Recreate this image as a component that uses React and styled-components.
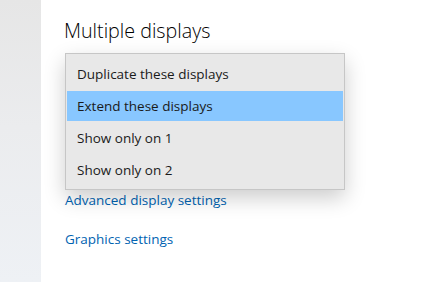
import React from "react";
import styled, { createGlobalStyle } from "styled-components";

const Global = createGlobalStyle`
  html, body { margin: 0; padding: 0; background: #ffffff; }
  body { font-family: "Open Sans", "Noto Sans", sans-serif; color: #1b1b1b; }
  #root { width: 434px; height: 282px; overflow: hidden; }
`;

const Page = styled.div`
  position: relative;
  display: flex;
  width: 434px;
  height: 282px;
  background: #ffffff;
`;

const Sidebar = styled.div`
  width: 41px;
  flex: 0 0 41px;
  background: linear-gradient(180deg, #e6e6e6 0%, #ebecee 45%, #eef1f5 100%);
`;

const Main = styled.div`
  flex: 1;
  display: flex;
  flex-direction: column;
  padding: 17px 0 0 23px;
`;

const Heading = styled.h2`
  margin: 0;
  font-size: 19.7px;
  font-weight: 350;
  line-height: 28px;
  color: #000;
  letter-spacing: 0;
`;

const Spacer = styled.div`
  height: ${(p) => p.h}px;
`;

const Link = styled.a`
  display: block;
  margin-left: 1px;
  font-size: 13.5px;
  line-height: 20px;
  color: #0063b1;
  text-decoration: none;
  cursor: pointer;
`;

const Menu = styled.ul`
  position: absolute;
  left: 65px;
  top: 53px;
  width: 276px;
  margin: 0;
  padding: 5px 1px 4px;
  list-style: none;
  background: #e8e8e8;
  border: 1px solid #c6c6c6;
  box-shadow: 0 8px 20px rgba(0, 0, 0, 0.2);
  display: flex;
  flex-direction: column;
  gap: 2px;
`;

const Item = styled.li`
  height: 30px;
  display: flex;
  align-items: center;
  padding-left: 10px;
  font-size: 13.5px;
  color: #1a1a1a;
  background: ${(p) => (p.selected ? "#88c7ff" : "transparent")};
`;

const items = [
  "Duplicate these displays",
  "Extend these displays",
  "Show only on 1",
  "Show only on 2",
];

export default function App() {
  return (
    <>
      <Global />
      <Page>
        <Sidebar />
        <Main>
          <Heading>Multiple displays</Heading>
          <Spacer h={145} />
          <Link>Advanced display settings</Link>
          <Spacer h={19} />
          <Link>Graphics settings</Link>
        </Main>
        <Menu role="listbox">
          {items.map((t, i) => (
            <Item key={t} selected={i === 1}>
              {t}
            </Item>
          ))}
        </Menu>
      </Page>
    </>
  );
}
